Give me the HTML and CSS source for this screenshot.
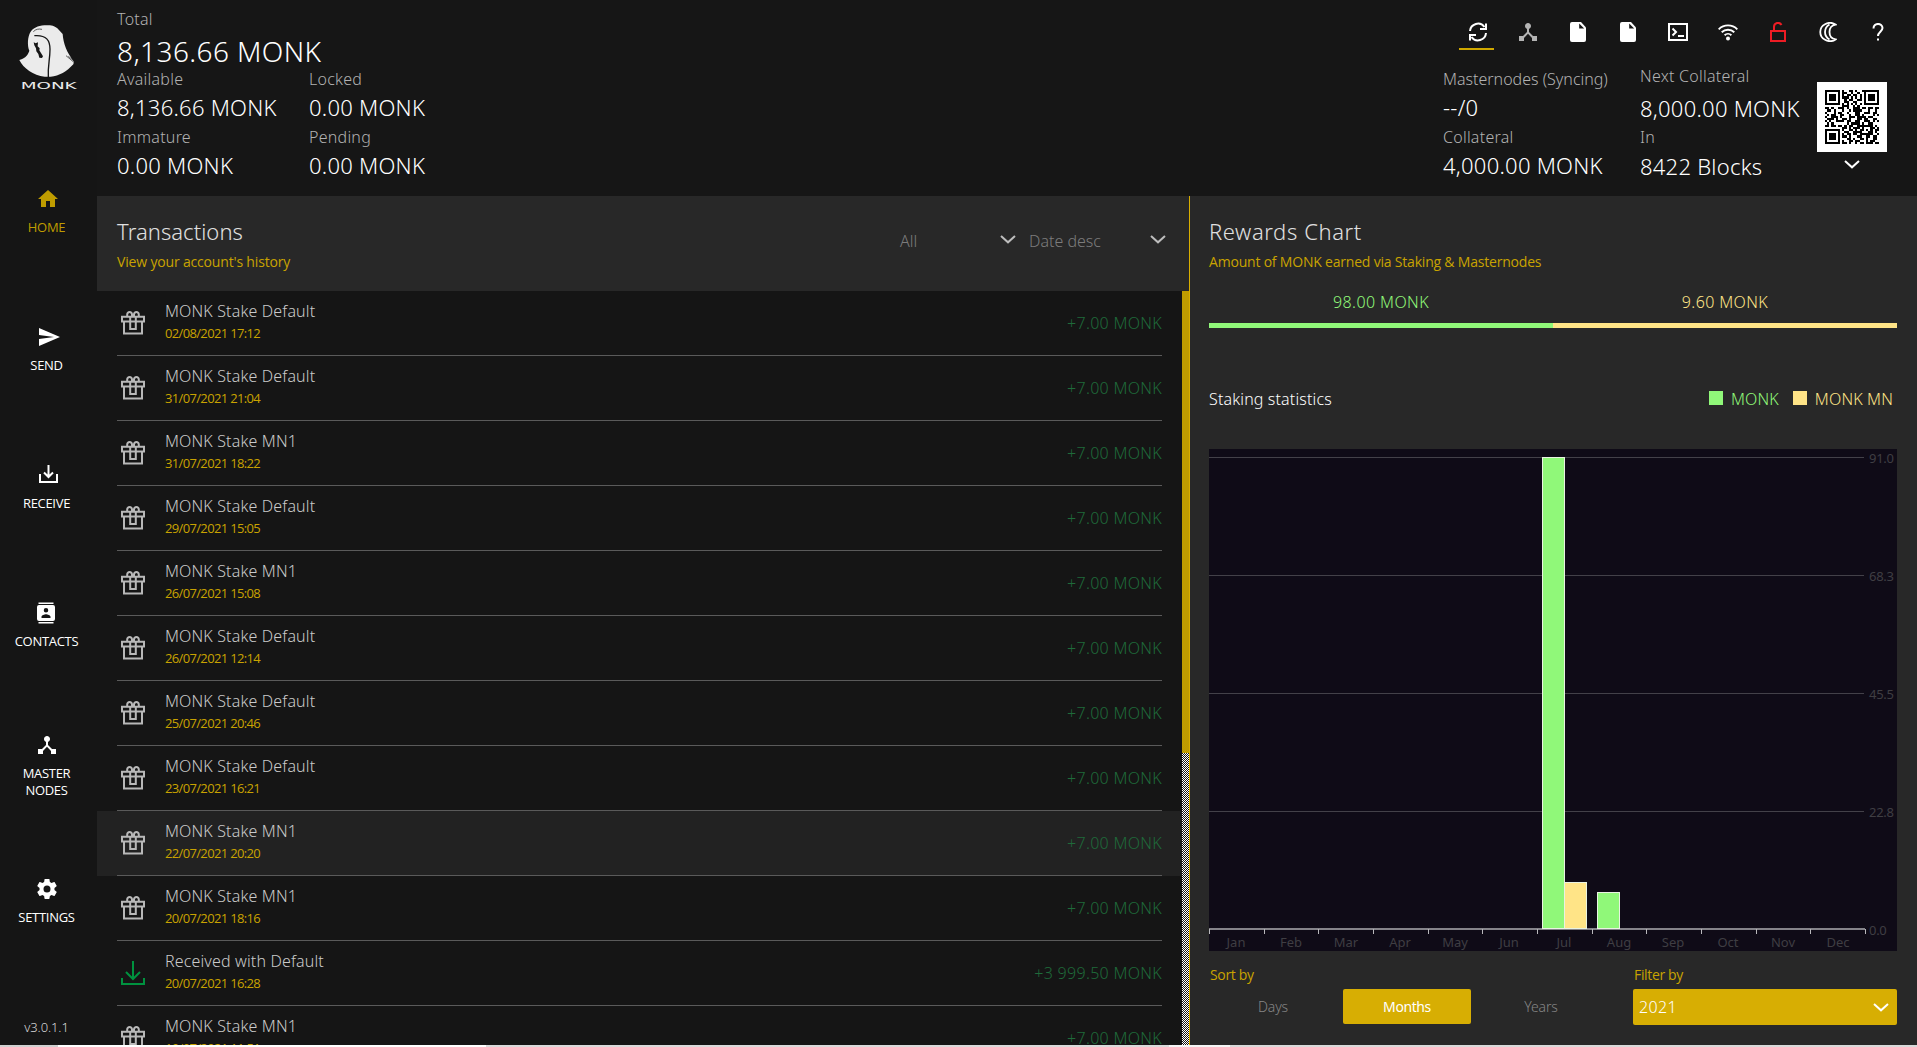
FILE: index.html
```html
<!DOCTYPE html>
<html lang="en">
<head>
<meta charset="utf-8">
<title>MONK Wallet</title>
<link rel="stylesheet" href="styles.css">
</head>
<body>
<svg class="sprite" aria-hidden="true">
  <symbol id="i-gift" viewBox="0 0 24 24"><g fill="none" stroke="currentColor" stroke-width="2"><path d="M1 5.700h22v4.800H1zM3 10.500v12h18v-12M9.200 5.700v12.300h5.600V5.700"/><path d="M11 5.200V3.500a2.400 2.400 0 1 0-4.800 0v1.700M13 5.200V3.500a2.400 2.400 0 1 1 4.800 0v1.700"/></g></symbol>
  <symbol id="i-get" viewBox="0 0 24 24"><path d="M12 0v17.500M5 11l7 7 7-7M1 17v6h22v-6" fill="none" stroke="currentColor" stroke-width="2"/></symbol>
  <symbol id="i-down" viewBox="0 0 16 9"><path d="M1 1l7 6.300L15 1" fill="none" stroke="currentColor" stroke-width="2"/></symbol>
  <symbol id="i-nodes" viewBox="0 0 24 24"><path fill="currentColor" d="M17 16l-4-4V8.820C14.160 8.400 15 7.300 15 6c0-1.660-1.340-3-3-3S9 4.340 9 6c0 1.300.84 2.400 2 2.820V12l-4 4H3v5h5v-3.050l4-4.200 4 4.200V21h5v-5z"/></symbol>
  <symbol id="i-file" viewBox="0 0 16 20"><path fill="currentColor" d="M2 0h9l5 5.500V18a2 2 0 0 1-2 2H2a2 2 0 0 1-2-2V2a2 2 0 0 1 2-2z"/><path fill="#161616" d="M9.200 1.500v5h5z"/></symbol>
</svg>
<div class="app">
  <nav class="side">
    <svg class="logo" viewBox="0 0 300 270">
      <path fill="#ebebeb" d="M140 46C158 45 166 50 172 55L188 72C190 100 200 128 222 155L220 163C200 185 178 198 152 200L134 200C100 196 70 175 58 150C78 144 85 132 88 122C82 108 82 80 92 65C104 50 120 46 140 46z"/>
      <path fill="none" stroke="#151515" stroke-width="4" d="M103 77C140 74 150 92 150 118C150 150 143 165 145 202"/>
      <path fill="none" stroke="#151515" stroke-width="2" d="M100 65C108 57 116 56 126 58M198 137L222 157M205 139L224 154"/>
      <path fill="#151515" d="M101 97l6 3 7-3-1 12 6 6-1 6 5 8 6 10-3 5-8-1-3-11-6-8-1-9-5-9z"/>
      <text x="62" y="236" textLength="168" lengthAdjust="spacingAndGlyphs" class="logo-text">MONK</text>
    </svg>
    <a class="nav on"><svg viewBox="0 0 24 24"><path fill="currentColor" d="M10 20v-6h4v6h5v-8h3L12 3 2 12h3v8z"/></svg><span>HOME</span></a>
    <a class="nav"><svg viewBox="0 0 24 24"><path fill="currentColor" d="M2 21l21-9L2 3v7l15 2-15 2z"/></svg><span>SEND</span></a>
    <a class="nav"><svg viewBox="0 0 24 24"><path fill="none" stroke="currentColor" stroke-width="2" d="M4 11v8h17v-8M12.500 2v12M8 9.500l4.500 4.500 4.500-4.500"/></svg><span>RECEIVE</span></a>
    <a class="nav centered"><svg viewBox="0 0 24 24"><path fill="currentColor" d="M19 4H5a2 2 0 0 0-2 2v12a2 2 0 0 0 2 2h14a2 2 0 0 0 2-2V6a2 2 0 0 0-2-2zM4.500 1.500h15V3h-15zM4.500 21h15v1.500h-15zM12 7a2.250 2.250 0 1 1 0 4.500A2.250 2.250 0 0 1 12 7zm4.500 10h-9v-1.250c0-1.500 3-2.500 4.500-2.500s4.500 1 4.500 2.500z" fill-rule="evenodd"/></svg><span>CONTACTS</span></a>
    <a class="nav centered two"><svg><use href="#i-nodes"/></svg><span>MASTER<br>NODES</span></a>
    <a class="nav centered"><svg viewBox="0 0 24 24"><path fill="currentColor" d="M19.430 12.980c.04-.32.07-.64.07-.98s-.03-.66-.07-.98l2.110-1.650c.19-.15.24-.42.12-.64l-2-3.460c-.12-.22-.39-.3-.61-.22l-2.490 1c-.52-.4-1.080-.73-1.690-.98l-.38-2.650C14.460 2.180 14.250 2 14 2h-4c-.25 0-.46.18-.49.42l-.38 2.650c-.61.25-1.170.59-1.690.98l-2.490-1c-.23-.09-.49 0-.61.22l-2 3.460c-.13.22-.07.49.12.64l2.110 1.650c-.04.32-.07.65-.07.98s.03.66.07.98l-2.110 1.650c-.19.15-.24.42-.12.64l2 3.460c.12.22.39.3.61.22l2.490-1c.52.4 1.080.73 1.690.98l.38 2.650c.03.24.24.42.49.42h4c.25 0 .46-.18.49-.42l.38-2.650c.61-.25 1.170-.59 1.690-.98l2.490 1c.23.09.49 0 .61-.22l2-3.460c.12-.22.07-.49-.12-.64zM12 15.500a3.500 3.500 0 1 1 0-7 3.500 3.500 0 0 1 0 7z"/></svg><span>SETTINGS</span></a>
    <div class="version">v3.0.1.1</div>
  </nav>
  <div class="main">
    <header class="top">
      <div class="balances">
        <div class="lbl">Total</div>
        <div class="total">8,136.66 MONK</div>
        <div class="grid">
          <div><div class="lbl">Available</div><div class="val">8,136.66 MONK</div></div>
          <div><div class="lbl">Locked</div><div class="val">0.00 MONK</div></div>
          <div><div class="lbl">Immature</div><div class="val">0.00 MONK</div></div>
          <div><div class="lbl">Pending</div><div class="val">0.00 MONK</div></div>
        </div>
      </div>
      <div class="right">
        <div class="tools">
          <span class="tool active"><svg viewBox="0 0 20 20" width="20" height="20"><g fill="none" stroke="#fff" stroke-width="2"><path d="M2 9a8 8 0 0 1 14.500-4M18 11a8 8 0 0 1-14.500 4"/><path d="M18 1.500V7h-6M2 18.500V13h6"/></g></svg></span>
          <span class="tool dim"><svg width="24" height="24"><use href="#i-nodes"/></svg></span>
          <span class="tool"><svg width="16" height="20"><use href="#i-file"/></svg></span>
          <span class="tool"><svg width="16" height="20"><use href="#i-file"/></svg></span>
          <span class="tool"><svg viewBox="0 0 20 18" width="20" height="18"><path d="M1 1h18v16H1zM4.500 5.500L8 9l-3.500 3.500M10 13h6" fill="none" stroke="#fff" stroke-width="2"/></svg></span>
          <span class="tool"><svg viewBox="0 0 20 18" width="20" height="18"><g fill="none" stroke="#fff" stroke-width="1.900"><path d="M.7 6.300a13 13 0 0 1 18.600 0M3.700 9.300a9 9 0 0 1 12.600 0M6.600 12.200a5 5 0 0 1 6.800 0"/></g><circle cx="10" cy="15.500" r="2" fill="#fff"/></svg></span>
          <span class="tool"><svg viewBox="0 0 16 20" width="16" height="20"><path d="M1 9h14v10H1zM4 9V5a4 4 0 0 1 7.500-2" fill="none" stroke="#ed1c24" stroke-width="2"/></svg></span>
          <span class="tool"><svg viewBox="0 0 18 20" width="18" height="20"><path d="M16.500 2.600C13.500.4 9.500.4 6 2.200A8.800 8.800 0 0 0 6 17.800c3.500 1.800 7.500 1.800 10.500-.4C8.500 16 8.500 4 16.500 2.600zM10.500 2.500C4.500 6 4.500 14 10.500 17.500" fill="none" stroke="#fff" stroke-width="1.800"/></svg></span>
          <span class="tool"><svg viewBox="0 0 12 18" width="12" height="18"><path d="M1.500 5.500C1.500-.5 10.500-.5 10.500 5c0 3.500-4.500 4-4.500 8" fill="none" stroke="#fff" stroke-width="2"/><path d="M5 15.500h2v2H5z" fill="#fff"/></svg></span>
        </div>
        <div class="info">
          <div class="c1"><div class="lbl mn">Masternodes (Syncing)</div><div class="val">--/0</div><div class="lbl">Collateral</div><div class="val">4,000.00 MONK</div></div>
          <div class="c2"><div class="lbl">Next Collateral</div><div class="val">8,000.00 MONK</div><div class="lbl">In</div><div class="val">8422 Blocks</div></div>
          <div class="c3">
            <div class="qr"><svg id="qr" viewBox="0 0 25 25" width="54" height="54" shape-rendering="crispEdges"></svg></div>
            <svg width="16" height="9"><use href="#i-down"/></svg>
          </div>
        </div>
      </div>
    </header>
    <div class="content">
      <section class="tx">
        <div class="tx-head">
          <div><h2>Transactions</h2><p class="sub">View your account's history</p></div>
          <div class="combos">
            <div class="combo all">All<svg width="16" height="9"><use href="#i-down"/></svg></div>
            <div class="combo">Date desc<svg width="16" height="9"><use href="#i-down"/></svg></div>
          </div>
        </div>
        <div class="tx-body">
          <div class="rows">
            <div class="row"><div class="in"><svg><use href="#i-gift"/></svg><div class="desc"><b>MONK Stake Default</b><i>02/08/2021 17:12</i></div><em>+7.00 MONK</em></div></div>
            <div class="row"><div class="in"><svg><use href="#i-gift"/></svg><div class="desc"><b>MONK Stake Default</b><i>31/07/2021 21:04</i></div><em>+7.00 MONK</em></div></div>
            <div class="row"><div class="in"><svg><use href="#i-gift"/></svg><div class="desc"><b>MONK Stake MN1</b><i>31/07/2021 18:22</i></div><em>+7.00 MONK</em></div></div>
            <div class="row"><div class="in"><svg><use href="#i-gift"/></svg><div class="desc"><b>MONK Stake Default</b><i>29/07/2021 15:05</i></div><em>+7.00 MONK</em></div></div>
            <div class="row"><div class="in"><svg><use href="#i-gift"/></svg><div class="desc"><b>MONK Stake MN1</b><i>26/07/2021 15:08</i></div><em>+7.00 MONK</em></div></div>
            <div class="row"><div class="in"><svg><use href="#i-gift"/></svg><div class="desc"><b>MONK Stake Default</b><i>26/07/2021 12:14</i></div><em>+7.00 MONK</em></div></div>
            <div class="row"><div class="in"><svg><use href="#i-gift"/></svg><div class="desc"><b>MONK Stake Default</b><i>25/07/2021 20:46</i></div><em>+7.00 MONK</em></div></div>
            <div class="row"><div class="in"><svg><use href="#i-gift"/></svg><div class="desc"><b>MONK Stake Default</b><i>23/07/2021 16:21</i></div><em>+7.00 MONK</em></div></div>
            <div class="row hover"><div class="in"><svg><use href="#i-gift"/></svg><div class="desc"><b>MONK Stake MN1</b><i>22/07/2021 20:20</i></div><em>+7.00 MONK</em></div></div>
            <div class="row"><div class="in"><svg><use href="#i-gift"/></svg><div class="desc"><b>MONK Stake MN1</b><i>20/07/2021 18:16</i></div><em>+7.00 MONK</em></div></div>
            <div class="row"><div class="in"><svg class="recv"><use href="#i-get"/></svg><div class="desc"><b>Received with Default</b><i>20/07/2021 16:28</i></div><em>+3 999.50 MONK</em></div></div>
            <div class="row"><div class="in"><svg><use href="#i-gift"/></svg><div class="desc"><b>MONK Stake MN1</b><i>19/07/2021 11:51</i></div><em>+7.00 MONK</em></div></div>
          </div>
          <div class="scroll"><div class="thumb"></div></div>
        </div>
      </section>
      <section class="rewards">
        <h2>Rewards Chart</h2>
        <p class="sub">Amount of MONK earned via Staking &amp; Masternodes</p>
        <div class="split"><div class="g">98.00 MONK</div><div class="y">9.60 MONK</div></div>
        <div class="stat-head"><span>Staking statistics</span><span class="legend"><i class="sq g"></i><span class="lg">MONK</span><i class="sq y"></i><span class="ly">MONK MN</span></span></div>
        <svg class="chart" width="688" height="502" viewBox="0 0 688 502">
          <rect width="688" height="502" fill="#0f0b17"/>
          <g fill="#434149"><rect y="8" width="655" height="1"/><rect y="126" width="655" height="1"/><rect y="244" width="655" height="1"/><rect y="362" width="655" height="1"/></g>
          <rect y="479" width="656" height="2" fill="#85848a"/>
          <path stroke="#b9b8bc" d="M.5 480v5M55.500 480v5M109.500 480v5M164.500 480v5M219.500 480v5M273.500 480v5M328.500 480v5M383.500 480v5M437.500 480v5M492.500 480v5M547.500 480v5M601.500 480v5M656.500 480v5"/>
          <g stroke="#e9f3e2"><rect x="333.500" y="8.500" width="22" height="471" fill="#90f879"/><rect x="355.500" y="433.500" width="22" height="46" fill="#ffe487"/><rect x="388.500" y="443.500" width="22" height="36" fill="#90f879"/></g>
          <g class="months"><text x="27" y="498">Jan</text><text x="82" y="498">Feb</text><text x="137" y="498">Mar</text><text x="191" y="498">Apr</text><text x="246" y="498">May</text><text x="300" y="498">Jun</text><text x="355" y="498">Jul</text><text x="410" y="498">Aug</text><text x="464" y="498">Sep</text><text x="519" y="498">Oct</text><text x="574" y="498">Nov</text><text x="629" y="498">Dec</text></g>
          <g class="axis"><text x="660" y="14">91.0</text><text x="660" y="132">68.3</text><text x="660" y="250">45.5</text><text x="660" y="368">22.8</text><text x="660" y="486">0.0</text></g>
        </svg>
        <div class="controls">
          <div class="sort"><div class="cap">Sort by</div><div class="btns"><span>Days</span><span class="sel">Months</span><span>Years</span></div></div>
          <div class="filter"><div class="cap">Filter by</div><div class="select">2021<svg width="16" height="9"><use href="#i-down"/></svg></div></div>
        </div>
      </section>
    </div>
  </div>
</div>
<div class="taskbar"></div>
<script src="qr.js"></script>
</body>
</html>
```
FILE: qr.js
```js
// Wallet address code: one string per module row, # is a dark module.
const rows = [
  '#######.#..##.#..########',
  '#.....#.##..#..#..#.....#',
  '#.###.#.#.##.##.#.#.###.#',
  '#.###.#.###.#.#.#.#.###.#',
  '#.###.#..#.##..##.#.###.#',
  '#.....#..##..##...#.....#',
  '#######.#.#.#.#.#.#######',
  '........###..#.#.........',
  '##.#..###.#..###.##.##.##',
  '.##.#...#..#.####...#..#.',
  '#...#.##..#...##..###.##.',
  '.#.##..##..#..##.#....#.#',
  '#..###.#...###.####.##...',
  '.###.#..##.#...##.##..##.',
  '#.#..####.##..##..###.#.#',
  '.#.#......#.####.#..##...',
  '##.##.##.#.##..#######.#.',
  '........##.#.###.#...##.#',
  '#######.#..##.#.##.#.#.##',
  '#.....#..##..####...##.#.',
  '#.###.#.#.##.##.######..#',
  '#.###.#.##.#...##..##.##.',
  '#.###.#...##.#..##.#..##.',
  '#.....#.#..##.##...#.##..',
  '#######.##.#..#.##.###.##',
];
const path = document.createElementNS('http://www.w3.org/2000/svg', 'path');
let d = '';
rows.forEach((r, y) => [...r].forEach((c, x) => { if (c === '#') d += `M${x} ${y}h1v1h-1z`; }));
path.setAttribute('d', d);
document.getElementById('qr').append(path);
```
FILE: styles.css
```css
* { box-sizing: border-box; }
body { margin: 0; height: 1047px; overflow: hidden; background: #151515; font-family: "Noto Sans", sans-serif; font-weight: 300; color: #fff; display: flex; flex-direction: column; }
h2, p { margin: 0; font-weight: inherit; }
b, i, em { font: inherit; }
svg { display: block; flex: none; }
.sprite { width: 0; height: 0; position: absolute; }
.app { height: 1045px; display: flex; overflow: hidden; }

/* sidebar */
.side { width: 97px; flex: none; background: #151515; display: flex; flex-direction: column; padding: 10px 4px 0 0; align-items: center; }
.logo { width: 100px; height: 90px; align-self: flex-start; margin-bottom: 42px; }
.logo-text { font: 400 27px "DejaVu Sans", sans-serif; fill: #ebebeb; }
.nav { height: 138px; display: flex; flex-direction: column; align-items: center; justify-content: center; gap: 8px; color: #fff; font: 400 13px/17px "Open Sans", sans-serif; letter-spacing: -.3px; text-align: center; }
.nav svg { width: 24px; height: 24px; margin-left: 4px; }
.nav.on { color: #bf9c00; }
.nav.centered svg { margin-left: 0; }
.nav.two { padding-top: 5px; }
.version { margin-top: 48px; font-size: 13px; line-height: 18px; color: #d8d8d8; letter-spacing: -.1px; }

/* header */
.main { flex: 1; display: flex; flex-direction: column; min-width: 0; }
.top { height: 196px; flex: none; background: #161616; display: flex; justify-content: space-between; padding-left: 20px; }
.lbl { font-size: 16px; line-height: 22px; color: #b2b2b2; letter-spacing: .25px; }
.lbl.mn { letter-spacing: 0; }
.val { font-size: 22px; line-height: 34px; height: 36px; letter-spacing: .25px; white-space: nowrap; }
.balances { padding-top: 8px; }
.total { font-size: 28px; line-height: 42px; height: 38px; letter-spacing: .4px; }
.grid { display: grid; grid-template-columns: 192px 192px; }
.right { width: 474px; display: flex; flex-direction: column; }
.tools { display: flex; gap: 15px; padding: 15px 0 0 16px; height: 50px; }
.tool { width: 35px; height: 35px; display: flex; align-items: center; justify-content: center; padding: 0 0 1px 3px; }
.tool.active { border-bottom: 2px solid #d0a800; padding-bottom: 0; }
.tool.dim { color: #b4b4b4; }
.info { display: flex; }
.c1 { width: 197px; padding-top: 18px; }
.c2 { width: 177px; padding-top: 15px; }
.c2 .val { height: 39px; line-height: 42px; }
.c2 .val:last-child { line-height: 37px; }
.c3 { width: 70px; padding-top: 32px; display: flex; flex-direction: column; align-items: center; gap: 8px; }
.qr { background: #fff; padding: 8px; }

/* transactions */
.content { flex: 1; display: flex; min-height: 0; }
.tx { width: 1093px; flex: none; border-right: 1px solid #d8ae00; display: flex; flex-direction: column; }
.tx-head { height: 95px; flex: none; background: #282828; padding: 20px 20px 0; display: flex; justify-content: space-between; }
h2 { font-size: 22px; line-height: 30px; height: 32px; color: #e0e0e0; letter-spacing: .05px; }
.sub { font: 400 14px/20px "Open Sans", sans-serif; color: #c9a300; letter-spacing: -.17px; padding-top: 4px; }
.combos { display: flex; padding-top: 9px; gap: 13px; margin-right: 3px; }
.combo { width: 137px; height: 32px; display: flex; align-items: center; justify-content: space-between; font-size: 16px; color: #7c7c7c; }
.combo.all { width: 116px; }
.combo svg { color: #bdbdbd; margin-top: -3px; }
.tx-body { flex: 1; display: flex; min-height: 0; }
.rows { width: 1085px; overflow: hidden; }
.row { height: 65px; padding: 0 20px; }
.row.hover { background: #222; }
.in { height: 65px; border-bottom: 1px solid #5a5a5a; display: flex; align-items: center; }
.in svg { width: 24px; height: 24px; margin-left: 4px; color: #b8b8b8; }
.in svg.recv { color: #00923f; }
.desc { flex: 1; margin-left: 20px; display: flex; flex-direction: column; padding-bottom: 2px; }
.desc b { font-size: 16px; line-height: 22px; color: #cacaca; letter-spacing: .15px; }
.desc i { font: 400 13px/22px "Open Sans", sans-serif; color: #c9a300; letter-spacing: -.65px; }
.in em { font-size: 16px; line-height: 22px; color: #1f6a3a; letter-spacing: .3px; font-weight: 350; }
.scroll { width: 7px; background: repeating-conic-gradient(#fff 0 25%, #151515 0 50%) 0 0 / 2px 2px; }
.thumb { height: 462px; background: #bf9c00; }

/* rewards */
.rewards { flex: 1; background: #282828; padding: 20px 20px 0 19px; }
.rewards h2 { letter-spacing: .6px; }
.rewards .sub { letter-spacing: -.2px; }
.split { display: grid; grid-template-columns: 1fr 1fr; text-align: center; margin-top: 19px; font-size: 16px; line-height: 22px; letter-spacing: .4px; }
.split div { padding-bottom: 10px; border-bottom: 5px solid; }
.split .g, .lg { color: #90f879; }
.split .y, .ly { color: #ffe487; }
.stat-head { display: flex; justify-content: space-between; margin-top: 60px; font-size: 16px; line-height: 22px; letter-spacing: .15px; }
.legend { display: flex; padding-right: 4px; }
.sq { width: 14px; height: 14px; margin: 3px 8px 0 0; }
.sq.g { background: #90f879; }
.sq.y { background: #ffe487; margin-left: 14px; }
.chart { margin-top: 39px; }
.months, .axis { font-size: 13px; font-weight: 400; fill: #3f3e43; }
.months { text-anchor: middle; }
.axis { letter-spacing: -.3px; }
.controls { display: flex; justify-content: space-between; padding-top: 14px; }
.cap { font: 400 14px/20px "Open Sans", sans-serif; padding: 0 1px 4px; color: #c9a300; letter-spacing: -.35px; }
.btns { display: flex; gap: 6px; }
.btns span { width: 128px; height: 35px; line-height: 35px; border-radius: 2px; text-align: center; font-size: 14px; color: #868686; letter-spacing: -.15px; }
.btns .sel { background: #d7ae03; color: #fff; font-weight: 400; letter-spacing: -.4px; }
.filter { width: 264px; }
.select { height: 36px; background: #d7ae03; border-radius: 2px; display: flex; align-items: center; justify-content: space-between; padding: 0 8px 0 6px; font-size: 16px; font-weight: 350; letter-spacing: .4px; }

/* window edge */
.taskbar { height: 2px; background: linear-gradient(90deg, #d0d0d0 58px, #fff 58px 486px, #dadada 486px 1169px, #f5f5f5 1169px 1230px, #d9d9d9 1230px); }
```
